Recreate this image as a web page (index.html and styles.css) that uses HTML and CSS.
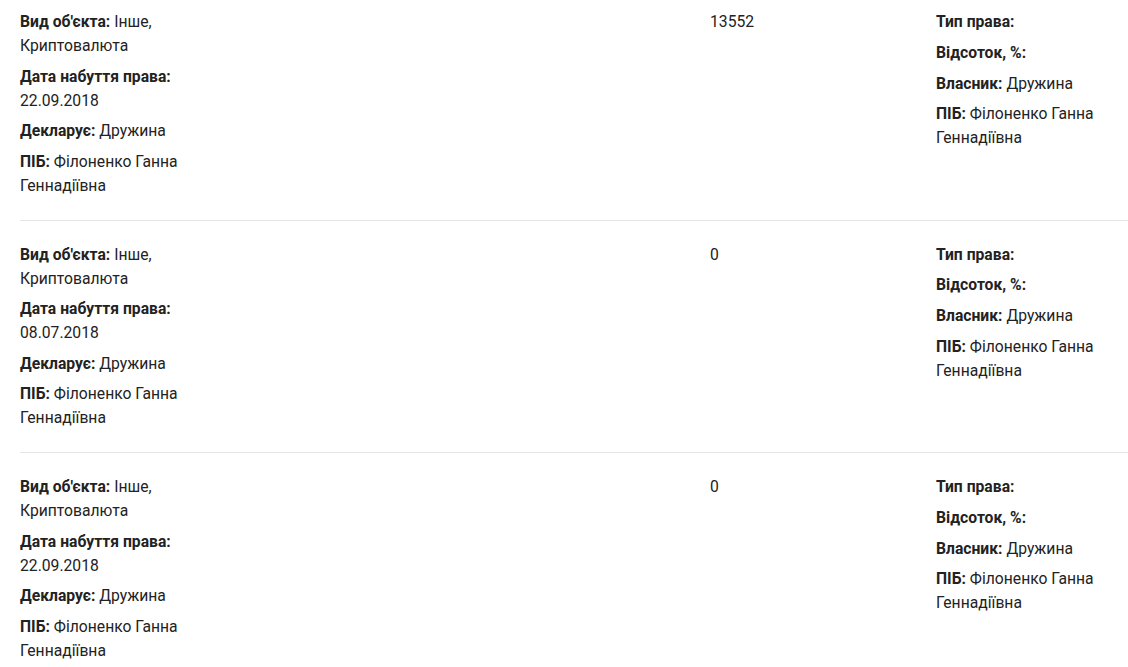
FILE: index.html
```html
<!DOCTYPE html>
<html lang="uk">
<head>
<meta charset="utf-8">
<link rel="stylesheet" href="styles.css">
</head>
<body>
<div class="list">
  <div class="row">
    <div class="col col-main">
      <p><b>Вид об'єкта:</b> Інше, Криптовалюта</p>
      <p><b>Дата набуття права:</b> 22.09.2018</p>
      <p><b>Декларує:</b> Дружина</p>
      <p><b>ПІБ:</b> Філоненко Ганна Геннадіївна</p>
    </div>
    <div class="col"></div>
    <div class="col"></div>
    <div class="col"><p>13552</p></div>
    <div class="col col-right">
      <p><b>Тип права:</b></p>
      <p><b>Відсоток, %:</b></p>
      <p><b>Власник:</b> Дружина</p>
      <p><b>ПІБ:</b> Філоненко Ганна Геннадіївна</p>
    </div>
  </div>
  <div class="row">
    <div class="col col-main">
      <p><b>Вид об'єкта:</b> Інше, Криптовалюта</p>
      <p><b>Дата набуття права:</b> 08.07.2018</p>
      <p><b>Декларує:</b> Дружина</p>
      <p><b>ПІБ:</b> Філоненко Ганна Геннадіївна</p>
    </div>
    <div class="col"></div>
    <div class="col"></div>
    <div class="col"><p>0</p></div>
    <div class="col col-right">
      <p><b>Тип права:</b></p>
      <p><b>Відсоток, %:</b></p>
      <p><b>Власник:</b> Дружина</p>
      <p><b>ПІБ:</b> Філоненко Ганна Геннадіївна</p>
    </div>
  </div>
  <div class="row">
    <div class="col col-main">
      <p><b>Вид об'єкта:</b> Інше, Криптовалюта</p>
      <p><b>Дата набуття права:</b> 22.09.2018</p>
      <p><b>Декларує:</b> Дружина</p>
      <p><b>ПІБ:</b> Філоненко Ганна Геннадіївна</p>
    </div>
    <div class="col"></div>
    <div class="col"></div>
    <div class="col"><p>0</p></div>
    <div class="col col-right">
      <p><b>Тип права:</b></p>
      <p><b>Відсоток, %:</b></p>
      <p><b>Власник:</b> Дружина</p>
      <p><b>ПІБ:</b> Філоненко Ганна Геннадіївна</p>
    </div>
  </div>
</div>
</body>
</html>
```
FILE: styles.css
```css
html, body {
  margin: 0;
  padding: 0;
  background: #fff;
}
body {
  font-family: Roboto, "Noto Sans", sans-serif;
  font-size: 15.7px;
  line-height: 24px;
  color: #222;
}
.list {
  padding-left: 20px;
}
.row {
  display: grid;
  grid-template-columns: 230px 230px 230px 226px 1fr;
  padding: 22px 0 15.5px;
  border-bottom: 1px solid #e5e5e5;
}
.row:first-child {
  padding-top: 10px;
}
.col-main {
  padding-right: 30px;
}
.col p {
  margin: 0 0 6.5px;
}
.col-right p {
  margin-bottom: 6.8px;
}
.col b {
  font-weight: 700;
}
```
